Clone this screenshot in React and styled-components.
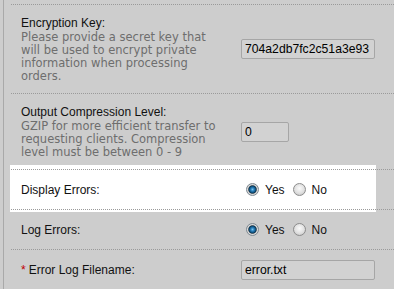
import React from 'react';
import styled, { createGlobalStyle, css } from 'styled-components';

const Global = createGlobalStyle`
  html, body { margin: 0; padding: 0; background: #cdcdcd; overflow: hidden; }
  body { font-family: "Liberation Sans", Arial, sans-serif; }
`;

const Page = styled.div`
  position: relative;
  z-index: 0;
  margin-left: 3px;
  border-left: 1px solid #a9a9a9;
  padding: 4px 0 0 7px;
  min-height: 289px;
  box-sizing: border-box;
  background: #cdcdcd;
`;

const Row = styled.div`
  position: relative;
  display: grid;
  grid-template-columns: 200px 1fr;
  column-gap: 20px;
  align-items: center;
  padding: 10px 0 10px 10px;
  border-top: 1px dotted #9a9a9a;
  ${(p) =>
    p.$highlight &&
    css`
      &::before {
        content: '';
        position: absolute;
        z-index: -1;
        left: -1px;
        right: 18px;
        top: -5px;
        bottom: -3px;
        background: #ffffff;
      }
    `}
`;

const LabelBlock = styled.div`
  display: flex;
  flex-direction: column;
`;

const Label = styled.div`
  font-size: 12px;
  line-height: 16px;
  color: #111;
`;

const Required = styled.span`
  color: #c00000;
  margin-right: 3px;
`;

const Desc = styled.div`
  font-family: "DejaVu Sans", Verdana, sans-serif;
  font-size: 11.5px;
  line-height: 13px;
  color: #6e6e6e;
`;

const TextInput = styled.input`
  box-sizing: border-box;
  width: ${(p) => p.$w}px;
  height: 20px;
  margin: 0;
  padding: 0 2px 0 3px;
  border: 1px solid #a6a6a6;
  border-radius: 2px;
  background: #d2d2d2;
  font-family: "Liberation Sans", Arial, sans-serif;
  font-size: 12.2px;
  color: #000;
  outline: none;
`;

const RadioGroup = styled.div`
  display: flex;
  align-items: center;
  height: 19px;
  padding-left: 5px;
  gap: 8px;
`;

const Option = styled.label`
  display: inline-flex;
  align-items: center;
  gap: 6px;
  font-size: 12px;
  color: #111;
`;

const Radio = styled.input.attrs({ type: 'radio' })`
  appearance: none;
  -webkit-appearance: none;
  box-sizing: border-box;
  margin: 0;
  width: 13px;
  height: 13px;
  border-radius: 50%;
  border: 1px solid #8c8c8c;
  background: radial-gradient(circle at 50% 40%, #fafafa 0%, #e0e0e0 55%, #bcbcbc 100%);
  &:checked {
    border-color: #7f8a92;
    background: radial-gradient(
      circle at 50% 50%,
      #7cc4ee 0px,
      #2b82bd 1.6px,
      #135b8c 2.8px,
      #0b3a5a 3.6px,
      #5d6a73 4.1px,
      #e4e4e4 4.7px,
      #c4c4c4 6px
    );
  }
`;

const YesNo = ({ name, value }) => (
  <RadioGroup>
    <Option>
      <Radio name={name} defaultChecked={value} />
      Yes
    </Option>
    <Option>
      <Radio name={name} defaultChecked={!value} />
      No
    </Option>
  </RadioGroup>
);

export default function App() {
  return (
    <>
      <Global />
      <Page>
        <Row>
          <LabelBlock>
            <Label>Encryption Key:</Label>
            <Desc>
              Please provide a secret key that will be used to encrypt private information when
              processing orders.
            </Desc>
          </LabelBlock>
          <TextInput $w={134} readOnly value="704a2db7fc2c51a3e93" />
        </Row>
        <Row>
          <LabelBlock>
            <Label>Output Compression Level:</Label>
            <Desc>
              GZIP for more efficient transfer to requesting clients. Compression level must be
              between 0 - 9
            </Desc>
          </LabelBlock>
          <TextInput $w={48} readOnly value="0" />
        </Row>
        <Row $highlight>
          <Label>Display Errors:</Label>
          <YesNo name="display" value={true} />
        </Row>
        <Row>
          <Label>Log Errors:</Label>
          <YesNo name="log" value={true} />
        </Row>
        <Row>
          <Label>
            <Required>*</Required>Error Log Filename:
          </Label>
          <TextInput $w={134} readOnly value="error.txt" />
        </Row>
      </Page>
    </>
  );
}
